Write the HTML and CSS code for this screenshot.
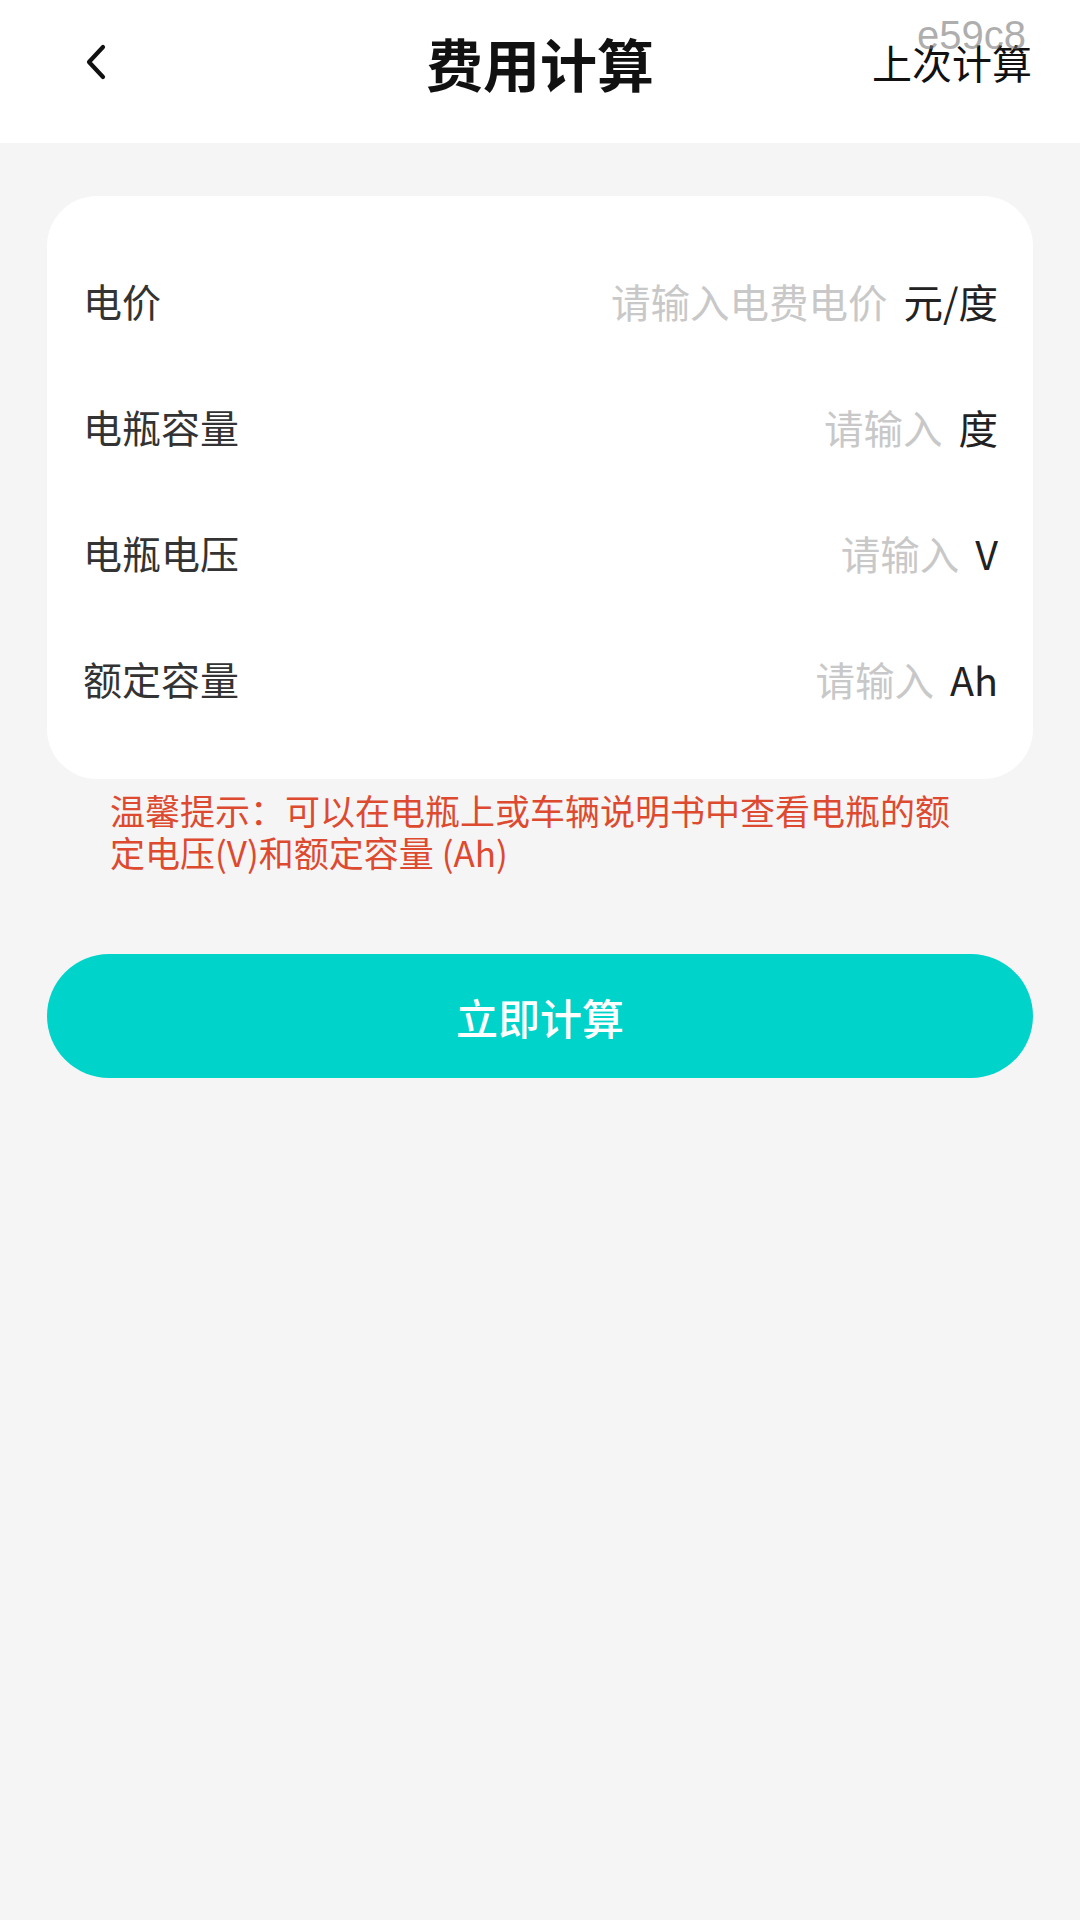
FILE: index.html
```html
<!DOCTYPE html>
<html lang="zh-CN">
<head>
    <meta charset="UTF-8">
    <meta name="viewport" content="width=device-width, initial-scale=1.0">
    <title>费用计算</title>
    <link rel="stylesheet" href="styles.css">
</head>
<body>
    <div class="header">
        <div class="back">
            <svg width="24" height="36" viewBox="0 0 24 36">
                <path d="M19 3 L5 18 L19 33" fill="none" stroke="#111" stroke-width="4.2" stroke-linecap="round" stroke-linejoin="round"/>
            </svg>
        </div>
        <div class="title">费用计算</div>
        <div class="last">上次计算<span class="mark">e59c8</span></div>
    </div>

    <div class="card">
        <div class="row">
            <span class="label">电价</span>
            <span class="field"><span class="placeholder">请输入电费电价</span><span class="unit">元/度</span></span>
        </div>
        <div class="row">
            <span class="label">电瓶容量</span>
            <span class="field"><span class="placeholder">请输入</span><span class="unit">度</span></span>
        </div>
        <div class="row">
            <span class="label">电瓶电压</span>
            <span class="field"><span class="placeholder">请输入</span><span class="unit">V</span></span>
        </div>
        <div class="row">
            <span class="label">额定容量</span>
            <span class="field"><span class="placeholder">请输入</span><span class="unit">Ah</span></span>
        </div>
    </div>

    <p class="tip">温馨提示：可以在电瓶上或车辆说明书中查看电瓶的额定电压(V)和额定容量 (Ah)</p>

    <button class="calc">立即计算</button>
</body>
</html>
```

FILE: styles.css
```css
body {
    margin: 0;
    background-color: #f5f5f5;
    font-family: "Noto Sans CJK SC", "Noto Sans", sans-serif;
    width: 1080px;
    height: 1920px;
}
.header {
    height: 143px;
    background-color: #fff;
    display: grid;
    grid-template-columns: 1fr auto 1fr;
    align-items: center;
    padding: 0 48px 20px 48px;
    box-sizing: border-box;
}
.back {
    padding-left: 36px;
    display: flex;
    align-items: center;
}
.title {
    font-size: 57px;
    font-weight: bold;
    color: #111;
}
.last {
    justify-self: end;
    position: relative;
    font-size: 40px;
    color: #111;
}
.last .mark {
    position: absolute;
    right: 6px;
    top: -20px;
    font-family: "Liberation Sans", Arial, sans-serif;
    font-size: 40px;
    color: rgba(120, 120, 120, 0.6);
}
.card {
    margin: 53px 47px 0 47px;
    background-color: #fff;
    border-radius: 50px;
    padding: 41px 35px 38px 36px;
}
.row {
    height: 126px;
    display: flex;
    align-items: center;
    justify-content: space-between;
}
.label {
    font-size: 39px;
    color: #333;
}
.field {
    display: flex;
    align-items: center;
    gap: 16px;
    font-size: 39.5px;
}
.placeholder {
    color: #c8c8c8;
}
.unit {
    color: #222;
}
.tip {
    margin: 10px 0 0 110px;
    width: 860px;
    font-size: 35px;
    line-height: 42px;
    color: #dd4a30;
}
.calc {
    display: block;
    margin: 81px 47px 0 47px;
    width: 986px;
    height: 124px;
    border: none;
    border-radius: 62px;
    background-color: #00d3ca;
    color: #fff;
    font-family: "Noto Sans CJK SC", sans-serif;
    font-size: 42px;
    font-weight: 500;
}
```
